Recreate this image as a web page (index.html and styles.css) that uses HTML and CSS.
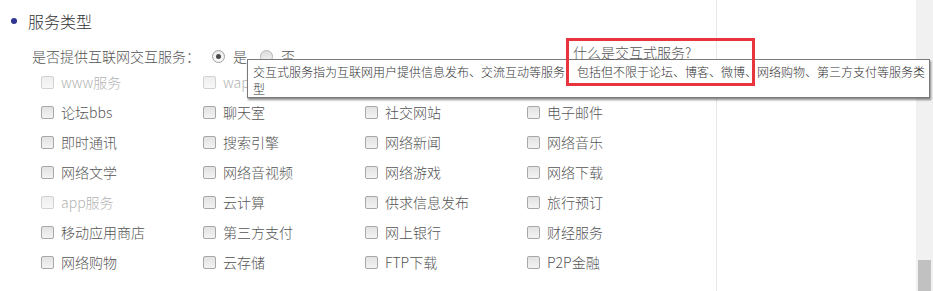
FILE: index.html
```html
<!DOCTYPE html>
<html lang="zh-CN">
<head>
<meta charset="utf-8">
<title>服务类型</title>
<link rel="stylesheet" href="styles.css">
</head>
<body>
<div class="page">
  <div class="main">
    <h3 class="section-title"><span class="dot"></span>服务类型</h3>
    <div class="radio-row">
      <span class="question">是否提供互联网交互服务：</span>
      <label class="radio"><span class="rb checked"></span>是</label>
      <label class="radio"><span class="rb"></span>否</label>
    </div>
    <div class="grid">
      <label class="cb disabled"><span class="box"></span>www服务</label>
      <label class="cb disabled"><span class="box"></span>wap服务</label>
      <span class="cell-empty"></span>
      <span class="cell-empty"></span>

      <label class="cb"><span class="box"></span>论坛bbs</label>
      <label class="cb"><span class="box"></span>聊天室</label>
      <label class="cb"><span class="box"></span>社交网站</label>
      <label class="cb"><span class="box"></span>电子邮件</label>

      <label class="cb"><span class="box"></span>即时通讯</label>
      <label class="cb"><span class="box"></span>搜索引擎</label>
      <label class="cb"><span class="box"></span>网络新闻</label>
      <label class="cb"><span class="box"></span>网络音乐</label>

      <label class="cb"><span class="box"></span>网络文学</label>
      <label class="cb"><span class="box"></span>网络音视频</label>
      <label class="cb"><span class="box"></span>网络游戏</label>
      <label class="cb"><span class="box"></span>网络下载</label>

      <label class="cb disabled"><span class="box"></span>app服务</label>
      <label class="cb"><span class="box"></span>云计算</label>
      <label class="cb"><span class="box"></span>供求信息发布</label>
      <label class="cb"><span class="box"></span>旅行预订</label>

      <label class="cb"><span class="box"></span>移动应用商店</label>
      <label class="cb"><span class="box"></span>第三方支付</label>
      <label class="cb"><span class="box"></span>网上银行</label>
      <label class="cb"><span class="box"></span>财经服务</label>

      <label class="cb"><span class="box"></span>网络购物</label>
      <label class="cb"><span class="box"></span>云存储</label>
      <label class="cb"><span class="box"></span>FTP下载</label>
      <label class="cb"><span class="box"></span>P2P金融</label>
    </div>

    <div class="tooltip">交互式服务指为互联网用户提供信息发布、交流互动等服务，包括但不限于论坛、博客、微博、网络购物、第三方支付等服务类型</div>
    <div class="highlight"><a class="help">什么是交互式服务?</a></div>
  </div>
  <div class="side"></div>
  <div class="scrollbar"><div class="thumb"></div></div>
</div>
</body>
</html>
```

FILE: styles.css
```css
* { box-sizing: border-box; }

html, body {
  margin: 0;
  padding: 0;
  background: #fff;
}

body {
  font-family: "Noto Sans CJK SC", "Noto Sans", sans-serif;
  font-weight: 300;
  color: #555;
  font-size: 14px;
}

.page {
  display: flex;
  height: 291px;
  overflow: hidden;
}

.main {
  position: relative;
  width: 717px;
  flex: none;
  border-right: 1px solid #e6e6e6;
}

.section-title {
  margin: 0;
  padding: 10px 0 0 11px;
  display: flex;
  align-items: center;
  font-size: 16px;
  font-weight: 300;
  line-height: 22px;
  color: #333;
}

.dot {
  width: 6px;
  height: 6px;
  border-radius: 50%;
  background: #2e3592;
  margin-right: 11px;
}

.radio-row {
  margin-top: 14px;
  padding-left: 32px;
  display: flex;
  align-items: center;
  height: 20px;
  line-height: 20px;
}

.question {
  width: 180px;
}

.radio {
  display: flex;
  align-items: center;
  margin-right: 13px;
}

.rb {
  width: 13px;
  height: 13px;
  border-radius: 50%;
  border: 1px solid #b4b4b4;
  background: linear-gradient(#dedede, #f2f2f2);
  margin-right: 8px;
  position: relative;
}

.rb.checked {
  background: linear-gradient(#ececec, #fafafa);
  border-color: #a0a0a0;
}

.rb.checked::after {
  content: "";
  position: absolute;
  left: 3px;
  top: 3px;
  width: 5px;
  height: 5px;
  border-radius: 50%;
  background: #4a4a4a;
}

.grid {
  margin-top: 1px;
  padding-left: 41px;
  display: grid;
  grid-template-columns: repeat(4, 162px);
  grid-auto-rows: 30px;
}

.cb {
  display: flex;
  align-items: center;
  line-height: 20px;
  color: #555;
}

.box {
  width: 13px;
  height: 13px;
  border: 1px solid #a8a8a8;
  border-radius: 2px;
  background: linear-gradient(#e2e2e2, #f3f3f3);
  margin-right: 7px;
  flex: none;
}

.cb.disabled {
  color: #b3b3b3;
}

.cb.disabled .box {
  border-color: #d2d2d2;
  background: linear-gradient(#eeeeee, #f8f8f8);
}

.tooltip {
  position: absolute;
  left: 247px;
  top: 59px;
  width: 683px;
  z-index: 5;
  background: #fff;
  border: 1px solid #7a7a7a;
  box-shadow: 1px 2px 2px rgba(0, 0, 0, 0.45);
  padding: 3px 2px 0 5px;
  font-size: 12px;
  line-height: 17px;
  color: #333;
}

.highlight {
  position: absolute;
  left: 566px;
  top: 38px;
  width: 189px;
  height: 48px;
  border: 3px solid #e8343c;
  z-index: 6;
  padding: 1px 0 0 4px;
}

.help {
  display: block;
  font-size: 14px;
  line-height: 20px;
  color: #555;
  text-decoration: none;
}

.side {
  flex: 1;
}

.scrollbar {
  width: 17px;
  flex: none;
  background: #f1f1f1;
  display: flex;
  flex-direction: column;
}

.thumb {
  margin: 260px 2px 0 2px;
  height: 40px;
  background: #c1c1c1;
}
```
